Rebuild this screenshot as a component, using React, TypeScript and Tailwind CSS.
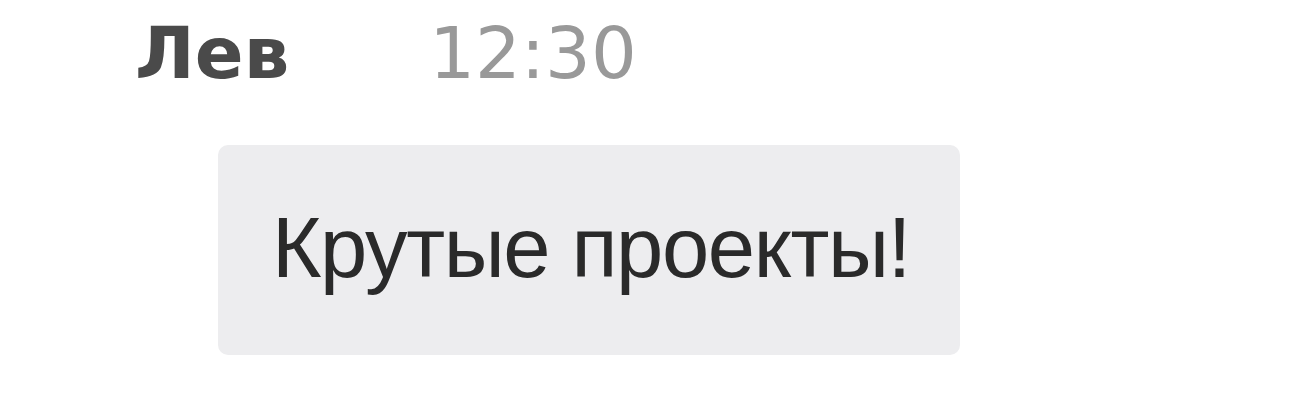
export default function App() {
  return (
    <div className="w-[1300px] h-[400px] bg-white font-['DejaVu_Sans',sans-serif] overflow-hidden">
      <div className="flex items-baseline gap-[140px] pl-[135px] pt-[8px]">
        <span className="text-[72px] leading-[90px] font-bold text-[#4a4a4a]">Лев</span>
        <span className="text-[72px] leading-[90px] text-[#999]">12:30</span>
      </div>
      <div className="pl-[218px] pt-[47px]">
        <div className="inline-flex rounded-[10px] bg-[#ededef] pl-[54px] pr-[50px] pb-[6px] h-[210px] items-center">
          <span className="font-['Liberation_Sans',sans-serif] text-[85px] leading-none text-[#2a2a2a] tracking-[-1.4px]">Крутые проекты!</span>
        </div>
      </div>
    </div>
  );
}
